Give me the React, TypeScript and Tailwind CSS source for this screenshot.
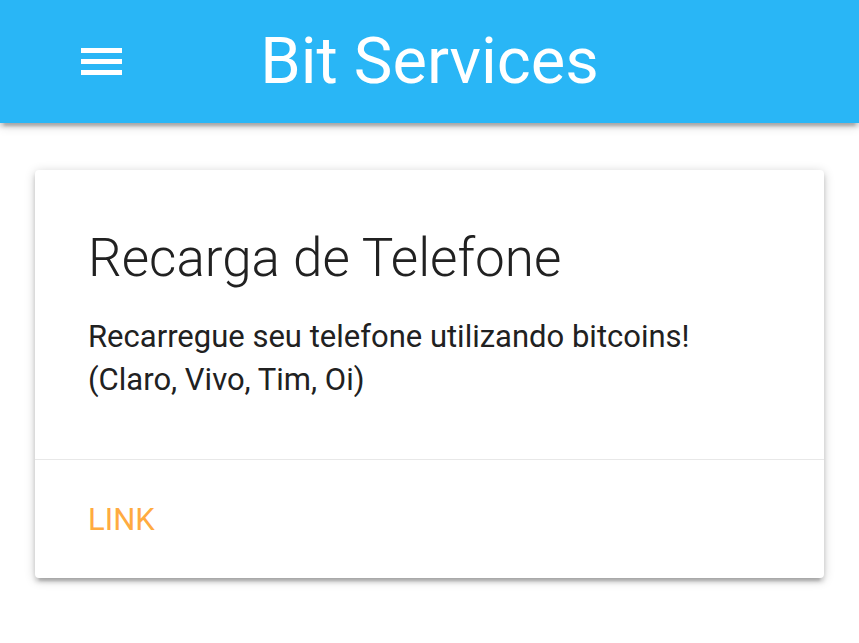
export default function App() {
  return (
    <div className="min-h-[643px] bg-white font-['Roboto',sans-serif]">
      {/* Top bar */}
      <header className="relative z-10 h-[123px] bg-[#29b6f6] shadow-[0_4px_4px_0_rgba(0,0,0,0.14),0_7px_2px_-4px_rgba(0,0,0,0.12),0_2px_11px_0_rgba(0,0,0,0.2)]">
        <div className="flex h-full items-center px-[81px]">
          <button className="flex w-[41px] flex-col gap-[6px]" aria-label="menu">
            <span className="block h-[5px] w-full bg-white" />
            <span className="block h-[5px] w-full bg-white" />
            <span className="block h-[5px] w-full bg-white" />
          </button>
        </div>
        <div className="absolute inset-0 flex items-center justify-center pointer-events-none">
          <span className="text-[65px] leading-none text-white">Bit Services</span>
        </div>
      </header>

      {/* Card */}
      <main className="px-[35px] pt-[47px]">
        <div className="rounded-[4px] bg-white shadow-[0_4px_4px_0_rgba(0,0,0,0.14),0_7px_2px_-4px_rgba(0,0,0,0.12),0_2px_11px_0_rgba(0,0,0,0.2)]">
          <div className="h-[289px] px-[53px] pt-[53px]">
            <h1 className="mb-[22px] text-[53px] font-light leading-[70px] text-[#212121]">
              Recarga de Telefone
            </h1>
            <p className="text-[31px] leading-[43px] text-[#212121]">
              Recarregue seu telefone utilizando bitcoins!
              <br />
              (Claro, Vivo, Tim, Oi)
            </p>
          </div>
          <div className="flex h-[119px] items-center border-t border-[#e8e8e8] px-[53px]">
            <a href="#" className="text-[31px] uppercase leading-none text-[#ffab40]">
              Link
            </a>
          </div>
        </div>
      </main>
    </div>
  );
}
